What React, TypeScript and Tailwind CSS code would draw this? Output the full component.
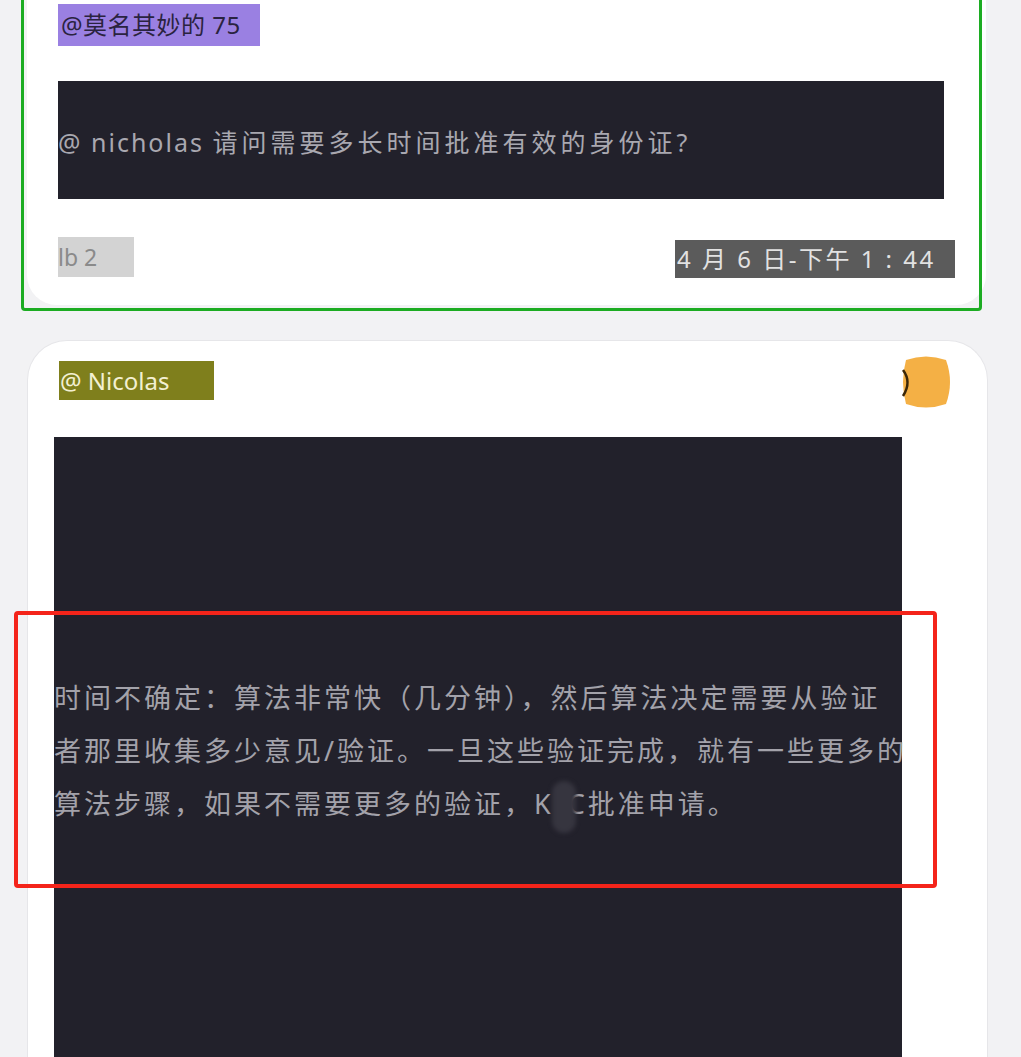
import React from "react";

const font = { fontFamily: '"Noto Sans", "Noto Sans CJK SC", sans-serif' };

const QuestionCard = () => {
  return (
    <div className="mx-[27px] mr-[35px] bg-white rounded-b-[30px] pt-[4px] pb-[27px] pl-[31px] pr-[31px]">
      <div className="inline-block bg-[#9a80e2] h-[42px] w-[202px] px-[3px] text-[24px] leading-[42px] text-[#2a2340] tracking-[0.5px]">
        @莫名其妙的 75
      </div>
      <div className="mt-[35px] mr-[11px] h-[118px] bg-[#22212b] flex items-center">
        <p className="text-[25px] text-[#a9a8b0] pt-[6px] whitespace-nowrap">
          <span className="tracking-[2px]">@ nicholas </span>
          <span className="tracking-[4px]">请问需要多长时间批准有效的身份证?</span>
        </p>
      </div>
      <div className="mt-[38px] flex items-start justify-between">
        <div className="bg-[#d3d3d3] h-[40px] w-[76px] text-[23px] leading-[40px] text-[#8a8a8a]">
          lb 2
        </div>
        <div className="mt-[3px] bg-[#5b5b5b] h-[38px] w-[280px] text-[24px] leading-[38px] text-[#e2e2e2] tracking-[2.5px] pl-[2px]">
          4 月 6 日-下午 1 : 44
        </div>
      </div>
    </div>
  );
};

const Blob = () => (
  <svg width="52" height="52" viewBox="0 0 52 52">
    <path
      d="M6 4 Q26 -3 46 4 Q54 26 46 48 Q26 55 6 48 Q0 26 6 4 Z"
      fill="#f4b045"
    />
    <path d="M3 14 Q12 26 3 40" stroke="#3a2608" strokeWidth="2.5" fill="none" />
  </svg>
);

const AnswerCard = () => {
  return (
    <div className="mx-[27px] mr-[33px] mt-[35px] bg-white rounded-t-[40px] border-[1.5px] border-[#e6e6e9] border-b-0 h-[720px] overflow-hidden">
      <div className="flex items-start justify-between pl-[31px] pr-[35px] pt-[20px]">
        <div className="bg-[#7f7f1c] h-[39px] w-[155px] text-[24px] leading-[39px] text-[#f3f0d2] px-[1px]">
          @ Nicolas
        </div>
        <div className="-mt-[5px]">
          <Blob />
        </div>
      </div>
      <div className="ml-[26px] mr-[85px] mt-[29px] bg-[#22212b] h-[640px] pt-[234px]">
        <p className="text-[27px] tracking-[3px] leading-[53px] text-[#a3a2aa] whitespace-nowrap">
          <span className="block">时间不确定：算法非常快（几分钟），然后算法决定需要从验证</span>
          <span className="block">者那里收集多少意见/验证。一旦这些验证完成，就有一些更多的</span>
          <span className="block">
            算法步骤，如果不需要更多的验证，K
            <span className="inline-block align-middle -ml-[2px] -mr-[8px] w-[24px] h-[52px] rounded-full bg-[#36353f] blur-[2px] relative" />
            C批准申请。
          </span>
        </p>
      </div>
    </div>
  );
};

export default function App() {
  return (
    <div className="relative h-[1057px] w-[1021px] overflow-hidden bg-[#f2f2f4]" style={font}>
      <QuestionCard />
      <AnswerCard />
      {/* annotation boxes */}
      <div className="absolute left-[21px] top-[-3px] w-[961px] h-[314px] border-[3px] border-[#1cac22] rounded-b-[4px] pointer-events-none" />
      <div className="absolute left-[14px] top-[611px] w-[923px] h-[277px] border-[4px] border-[#f4241a] rounded-[4px] pointer-events-none" />
    </div>
  );
}
